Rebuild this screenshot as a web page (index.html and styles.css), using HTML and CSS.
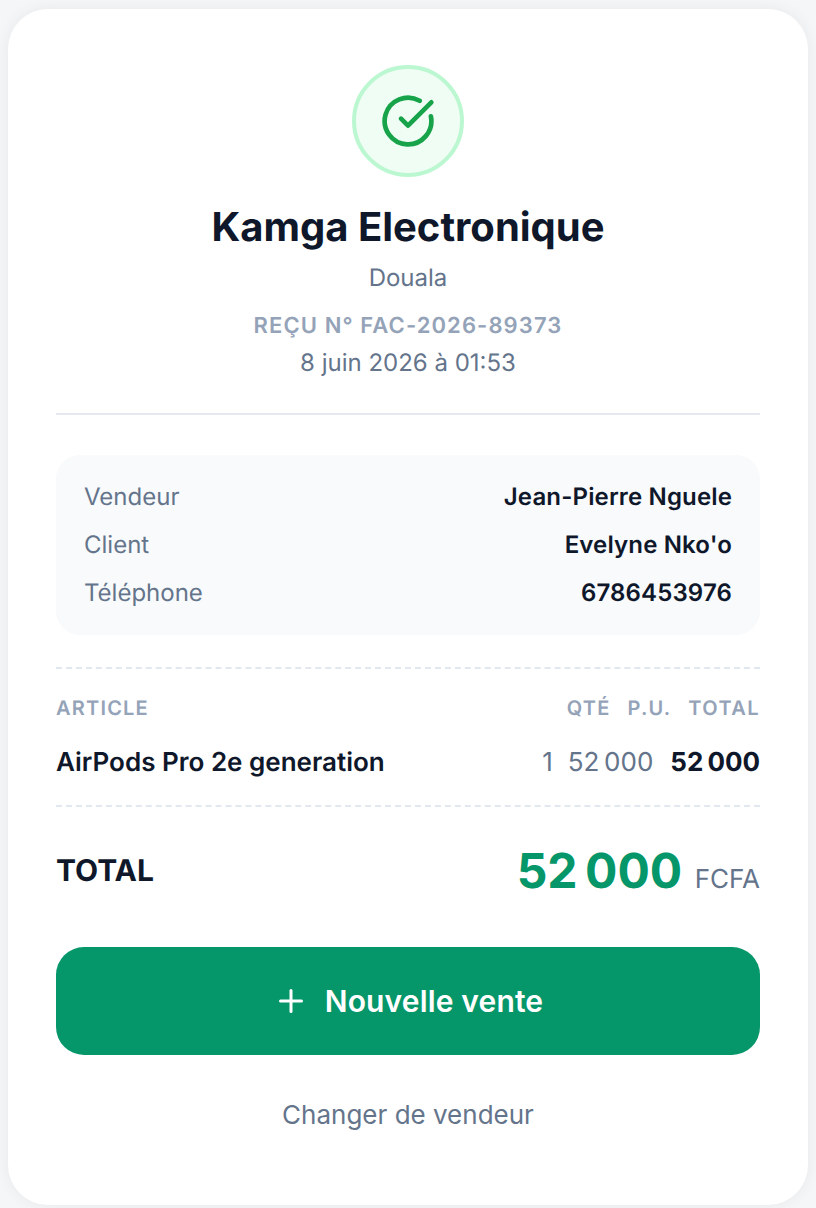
FILE: index.html
```html
<!DOCTYPE html>
<html lang="fr">
<head>
<meta charset="utf-8">
<title>Reçu</title>
<link rel="stylesheet" href="styles.css">
</head>
<body>
<main class="card">
  <header class="head">
    <div class="badge">
      <svg class="check" viewBox="0 0 24 24" width="56" height="56" fill="none" stroke="currentColor" stroke-width="2" stroke-linecap="round" stroke-linejoin="round">
        <path d="M21.801 10A10 10 0 1 1 17 3.335"/>
        <path d="m9 11 3 3L22 4"/>
      </svg>
    </div>
    <h1 class="shop">Kamga Electronique</h1>
    <p class="city">Douala</p>
    <p class="ref">REÇU N° FAC-2026-89373</p>
    <p class="date">8 juin 2026 à 01:53</p>
  </header>
  <section class="info">
    <div class="info-row"><span class="info-label">Vendeur</span><span class="info-value">Jean-Pierre Nguele</span></div>
    <div class="info-row"><span class="info-label">Client</span><span class="info-value">Evelyne Nko'o</span></div>
    <div class="info-row"><span class="info-label">Téléphone</span><span class="info-value">6786453976</span></div>
  </section>
  <section class="items">
    <div class="items-head">
      <span class="grow">ARTICLE</span>
      <span>QTÉ</span><span>P.U.</span><span class="head-total">TOTAL</span>
    </div>
    <div class="item">
      <span class="grow item-name">AirPods Pro 2e generation</span>
      <span class="muted qty">1</span><span class="muted">52&#8239;000</span><span class="item-total">52&#8239;000</span>
    </div>
  </section>
  <section class="total">
    <span class="total-label">TOTAL</span>
    <span class="total-value"><span class="amount">52&#8239;000</span> <span class="currency">FCFA</span></span>
  </section>
  <button class="primary" type="button">
    <svg viewBox="0 0 24 24" width="36" height="36" fill="none" stroke="currentColor" stroke-width="2" stroke-linecap="round"><path d="M5 12h14"/><path d="M12 5v14"/></svg>
    Nouvelle vente
  </button>
  <button class="secondary" type="button">Changer de vendeur</button>
</main>
</body>
</html>
```
FILE: styles.css
```css
* { box-sizing: border-box; }
html, body { margin: 0; height: 100%; }
body {
  background: #f5f6f8;
  font-family: Inter, "Liberation Sans", sans-serif;
  text-rendering: geometricPrecision;
  color: #0f172a;
  padding: 9px 8px 3px;
  overflow: hidden;
}
.card {
  background: #fff;
  border-radius: 40px;
  padding: 56px 48px 0;
  height: 1196px;
  box-shadow: 0 0 16px rgba(15, 23, 42, 0.06);
}
.head {
  display: flex;
  flex-direction: column;
  align-items: center;
  padding-bottom: 34px;
  border-bottom: 2px solid #e5e9ef;
}
.badge {
  width: 112px;
  height: 112px;
  border-radius: 50%;
  background: #f0fdf4;
  border: 4px solid #bbf7d0;
  color: #16a34a;
  display: flex;
  align-items: center;
  justify-content: center;
}
.shop {
  margin: 28px 0 0;
  font-size: 40px;
  line-height: 44px;
  font-weight: 700;
}
.city {
  margin: 13px 0 0;
  font-size: 24px;
  line-height: 32px;
  color: #64748b;
}
.ref {
  margin: 18px 0 0;
  font-size: 22px;
  line-height: 28px;
  font-weight: 600;
  letter-spacing: 1.1px;
  color: #94a3b8;
}
.date {
  margin: 7px 0 0;
  font-size: 24px;
  line-height: 32px;
  color: #64748b;
}
.info {
  margin-top: 40px;
  background: #f8fafc;
  border-radius: 24px;
  padding: 26px 28px;
  display: flex;
  flex-direction: column;
  gap: 16px;
}
.info-row {
  display: flex;
  justify-content: space-between;
  font-size: 24px;
  line-height: 32px;
}
.info-label { color: #64748b; }
.info-value { font-weight: 600; letter-spacing: 0.15px; }
.items {
  margin-top: 32px;
  padding: 25px 0 24px;
  border-top: 2px dashed #e2e8f0;
  border-bottom: 2px dashed #e2e8f0;
}
.items-head, .item {
  display: flex;
  gap: 17px;
}
.grow { flex: 1; }
.items-head {
  font-size: 20px;
  line-height: 28px;
  font-weight: 600;
  letter-spacing: 1.2px;
  color: #94a3b8;
}
.head-total { letter-spacing: 1.4px; }
.item {
  margin-top: 23px;
  font-size: 26px;
  line-height: 36px;
}
.item-name { font-weight: 600; }
.item-total { font-weight: 700; }
.muted { color: #64748b; }
.qty { margin-right: -2px; }
.total {
  margin-top: 34px;
  display: flex;
  justify-content: space-between;
  align-items: center;
}
.total-label { font-size: 30px; font-weight: 700; }
.amount { font-size: 48px; font-weight: 700; color: #059669; }
.currency { font-size: 26px; color: #64748b; margin-left: 8px; }
.primary {
  margin-top: 47px;
  width: 100%;
  height: 108px;
  border: 0;
  border-radius: 28px;
  background: #059669;
  color: #fff;
  font: 600 30px Inter, "Liberation Sans", sans-serif;
  letter-spacing: 0.15px;
  display: flex;
  align-items: center;
  justify-content: center;
  gap: 16px;
}
.secondary {
  display: block;
  margin: 41px auto 0;
  border: 0;
  background: none;
  color: #64748b;
  font: 400 26px/36px Inter, "Liberation Sans", sans-serif;
}
```
